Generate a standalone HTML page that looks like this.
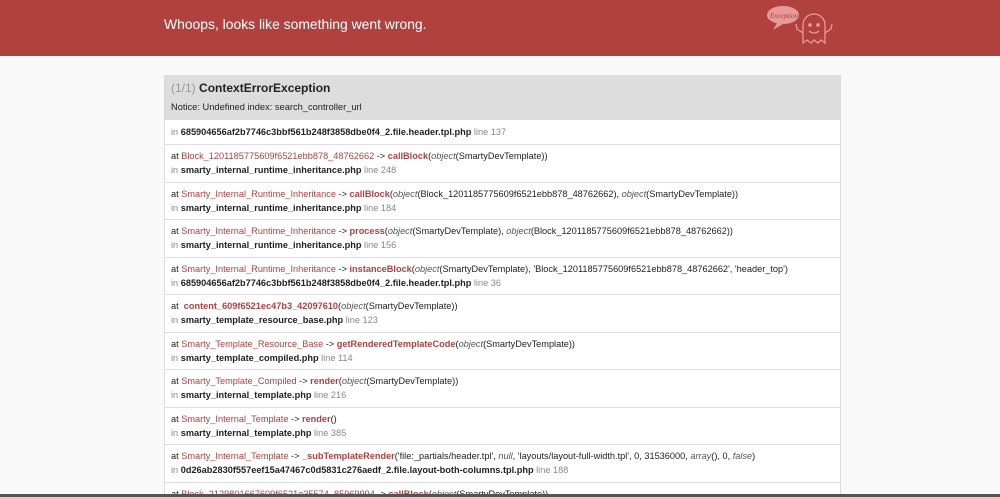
<!DOCTYPE html>
<html style="height:497px;overflow:hidden"><head><style>
html,body{margin:0;height:497px;overflow:hidden}
body{background:#f9f9f9;font-family:"Liberation Sans",Arial,sans-serif;color:#222;position:relative}
.hd{background:#b0413e;height:56px;position:relative}
.hd h1{margin:0;position:absolute;left:164px;top:16px;font-size:13.9px;font-weight:normal;color:#fff}
.box{position:absolute;left:164px;top:75px;width:675px;border:1px solid #ddd;background:#fff}
.top{background:#ddd;padding:4px 6px 5px;height:34px}
.top .t{font-size:12px;font-weight:bold;color:#222;line-height:17px}
.top .t span{color:#999;font-weight:normal}
.top .m{font-size:9.3px;margin-top:5px;color:#222}
.r{border-top:1px solid #ddd;padding:0 6px;font-size:9.2px;color:#222}
.r1{height:24px;line-height:24px}
.r2{height:37.5px;padding-top:4px;box-sizing:border-box;line-height:14px}
.g{color:#888}
.red{color:#b0413e}
.fn{color:#b0413e;font-weight:bold}
i{color:#555}
b{font-weight:bold}
.bar{position:absolute;left:0;right:0;top:494px;height:3px;background:#555}
</style></head><body>
<div class="hd"><h1>Whoops, looks like something went wrong.</h1>
<svg style="position:absolute;left:765px;top:3px" width="72" height="46" viewBox="0 0 72 46" fill="none" stroke="#e89a98" stroke-width="1.3">
<ellipse cx="18" cy="12" rx="16" ry="9" fill="#e89a98" stroke="none"/>
<path d="M12 20 L8 27 L18 21" fill="#e89a98" stroke="none"/>
<text x="5" y="15" font-size="7" fill="#b0413e" stroke="none" font-family="Liberation Serif" font-style="italic">Exception!</text>
<path d="M38 40 V22 a11 11 0 0 1 22 0 V40 l-4 -3 -3 3 -4 -3 -3 3 -4 -3 z"/>
<circle cx="45" cy="22" r="1.2" fill="#e89a98"/><circle cx="53" cy="22" r="1.2" fill="#e89a98"/>
<path d="M44 28 q5 4 10 0"/>
<path d="M38 30 l-6 -4 -1 -5 M60 30 l6 -4 1 -5"/>
</svg>
</div>
<div class="box">
<div class="top"><div class="t"><span>(1/1)</span> ContextErrorException</div><div class="m">Notice: Undefined index: search_controller_url</div></div>
<div class="r r1"><span class="g">in</span> <b>685904656af2b7746c3bbf561b248f3858dbe0f4_2.file.header.tpl.php</b> <span class="g">line 137</span></div>
<div class="r r2"><div>at <span class="red">Block_1201185775609f6521ebb878_48762662</span> -&gt; <span class="fn">callBlock</span>(<i>object</i>(SmartyDevTemplate))</div><div><span class="g">in</span> <b>smarty_internal_runtime_inheritance.php</b> <span class="g">line 248</span></div></div>
<div class="r r2"><div>at <span class="red">Smarty_Internal_Runtime_Inheritance</span> -&gt; <span class="fn">callBlock</span>(<i>object</i>(Block_1201185775609f6521ebb878_48762662), <i>object</i>(SmartyDevTemplate))</div><div><span class="g">in</span> <b>smarty_internal_runtime_inheritance.php</b> <span class="g">line 184</span></div></div>
<div class="r r2"><div>at <span class="red">Smarty_Internal_Runtime_Inheritance</span> -&gt; <span class="fn">process</span>(<i>object</i>(SmartyDevTemplate), <i>object</i>(Block_1201185775609f6521ebb878_48762662))</div><div><span class="g">in</span> <b>smarty_internal_runtime_inheritance.php</b> <span class="g">line 156</span></div></div>
<div class="r r2"><div>at <span class="red">Smarty_Internal_Runtime_Inheritance</span> -&gt; <span class="fn">instanceBlock</span>(<i>object</i>(SmartyDevTemplate), 'Block_1201185775609f6521ebb878_48762662', 'header_top')</div><div><span class="g">in</span> <b>685904656af2b7746c3bbf561b248f3858dbe0f4_2.file.header.tpl.php</b> <span class="g">line 36</span></div></div>
<div class="r r2"><div>at &nbsp;<span class="fn">content_609f6521ec47b3_42097610</span>(<i>object</i>(SmartyDevTemplate))</div><div><span class="g">in</span> <b>smarty_template_resource_base.php</b> <span class="g">line 123</span></div></div>
<div class="r r2"><div>at <span class="red">Smarty_Template_Resource_Base</span> -&gt; <span class="fn">getRenderedTemplateCode</span>(<i>object</i>(SmartyDevTemplate))</div><div><span class="g">in</span> <b>smarty_template_compiled.php</b> <span class="g">line 114</span></div></div>
<div class="r r2"><div>at <span class="red">Smarty_Template_Compiled</span> -&gt; <span class="fn">render</span>(<i>object</i>(SmartyDevTemplate))</div><div><span class="g">in</span> <b>smarty_internal_template.php</b> <span class="g">line 216</span></div></div>
<div class="r r2"><div>at <span class="red">Smarty_Internal_Template</span> -&gt; <span class="fn">render</span>()</div><div><span class="g">in</span> <b>smarty_internal_template.php</b> <span class="g">line 385</span></div></div>
<div class="r r2"><div>at <span class="red">Smarty_Internal_Template</span> -&gt; <span class="fn">_subTemplateRender</span>('file:_partials/header.tpl', <i>null</i>, 'layouts/layout-full-width.tpl', 0, 31536000, <i>array</i>(), 0, <i>false</i>)</div><div><span class="g">in</span> <b>0d26ab2830f557eef15a47467c0d5831c276aedf_2.file.layout-both-columns.tpl.php</b> <span class="g">line 188</span></div></div>
<div class="r r2"><div>at <span class="red">Block_2129801667609f6521e35574_85969994</span> -&gt; <span class="fn">callBlock</span>(<i>object</i>(SmartyDevTemplate))</div></div>
</div>
<div class="bar"></div>
</body></html>
